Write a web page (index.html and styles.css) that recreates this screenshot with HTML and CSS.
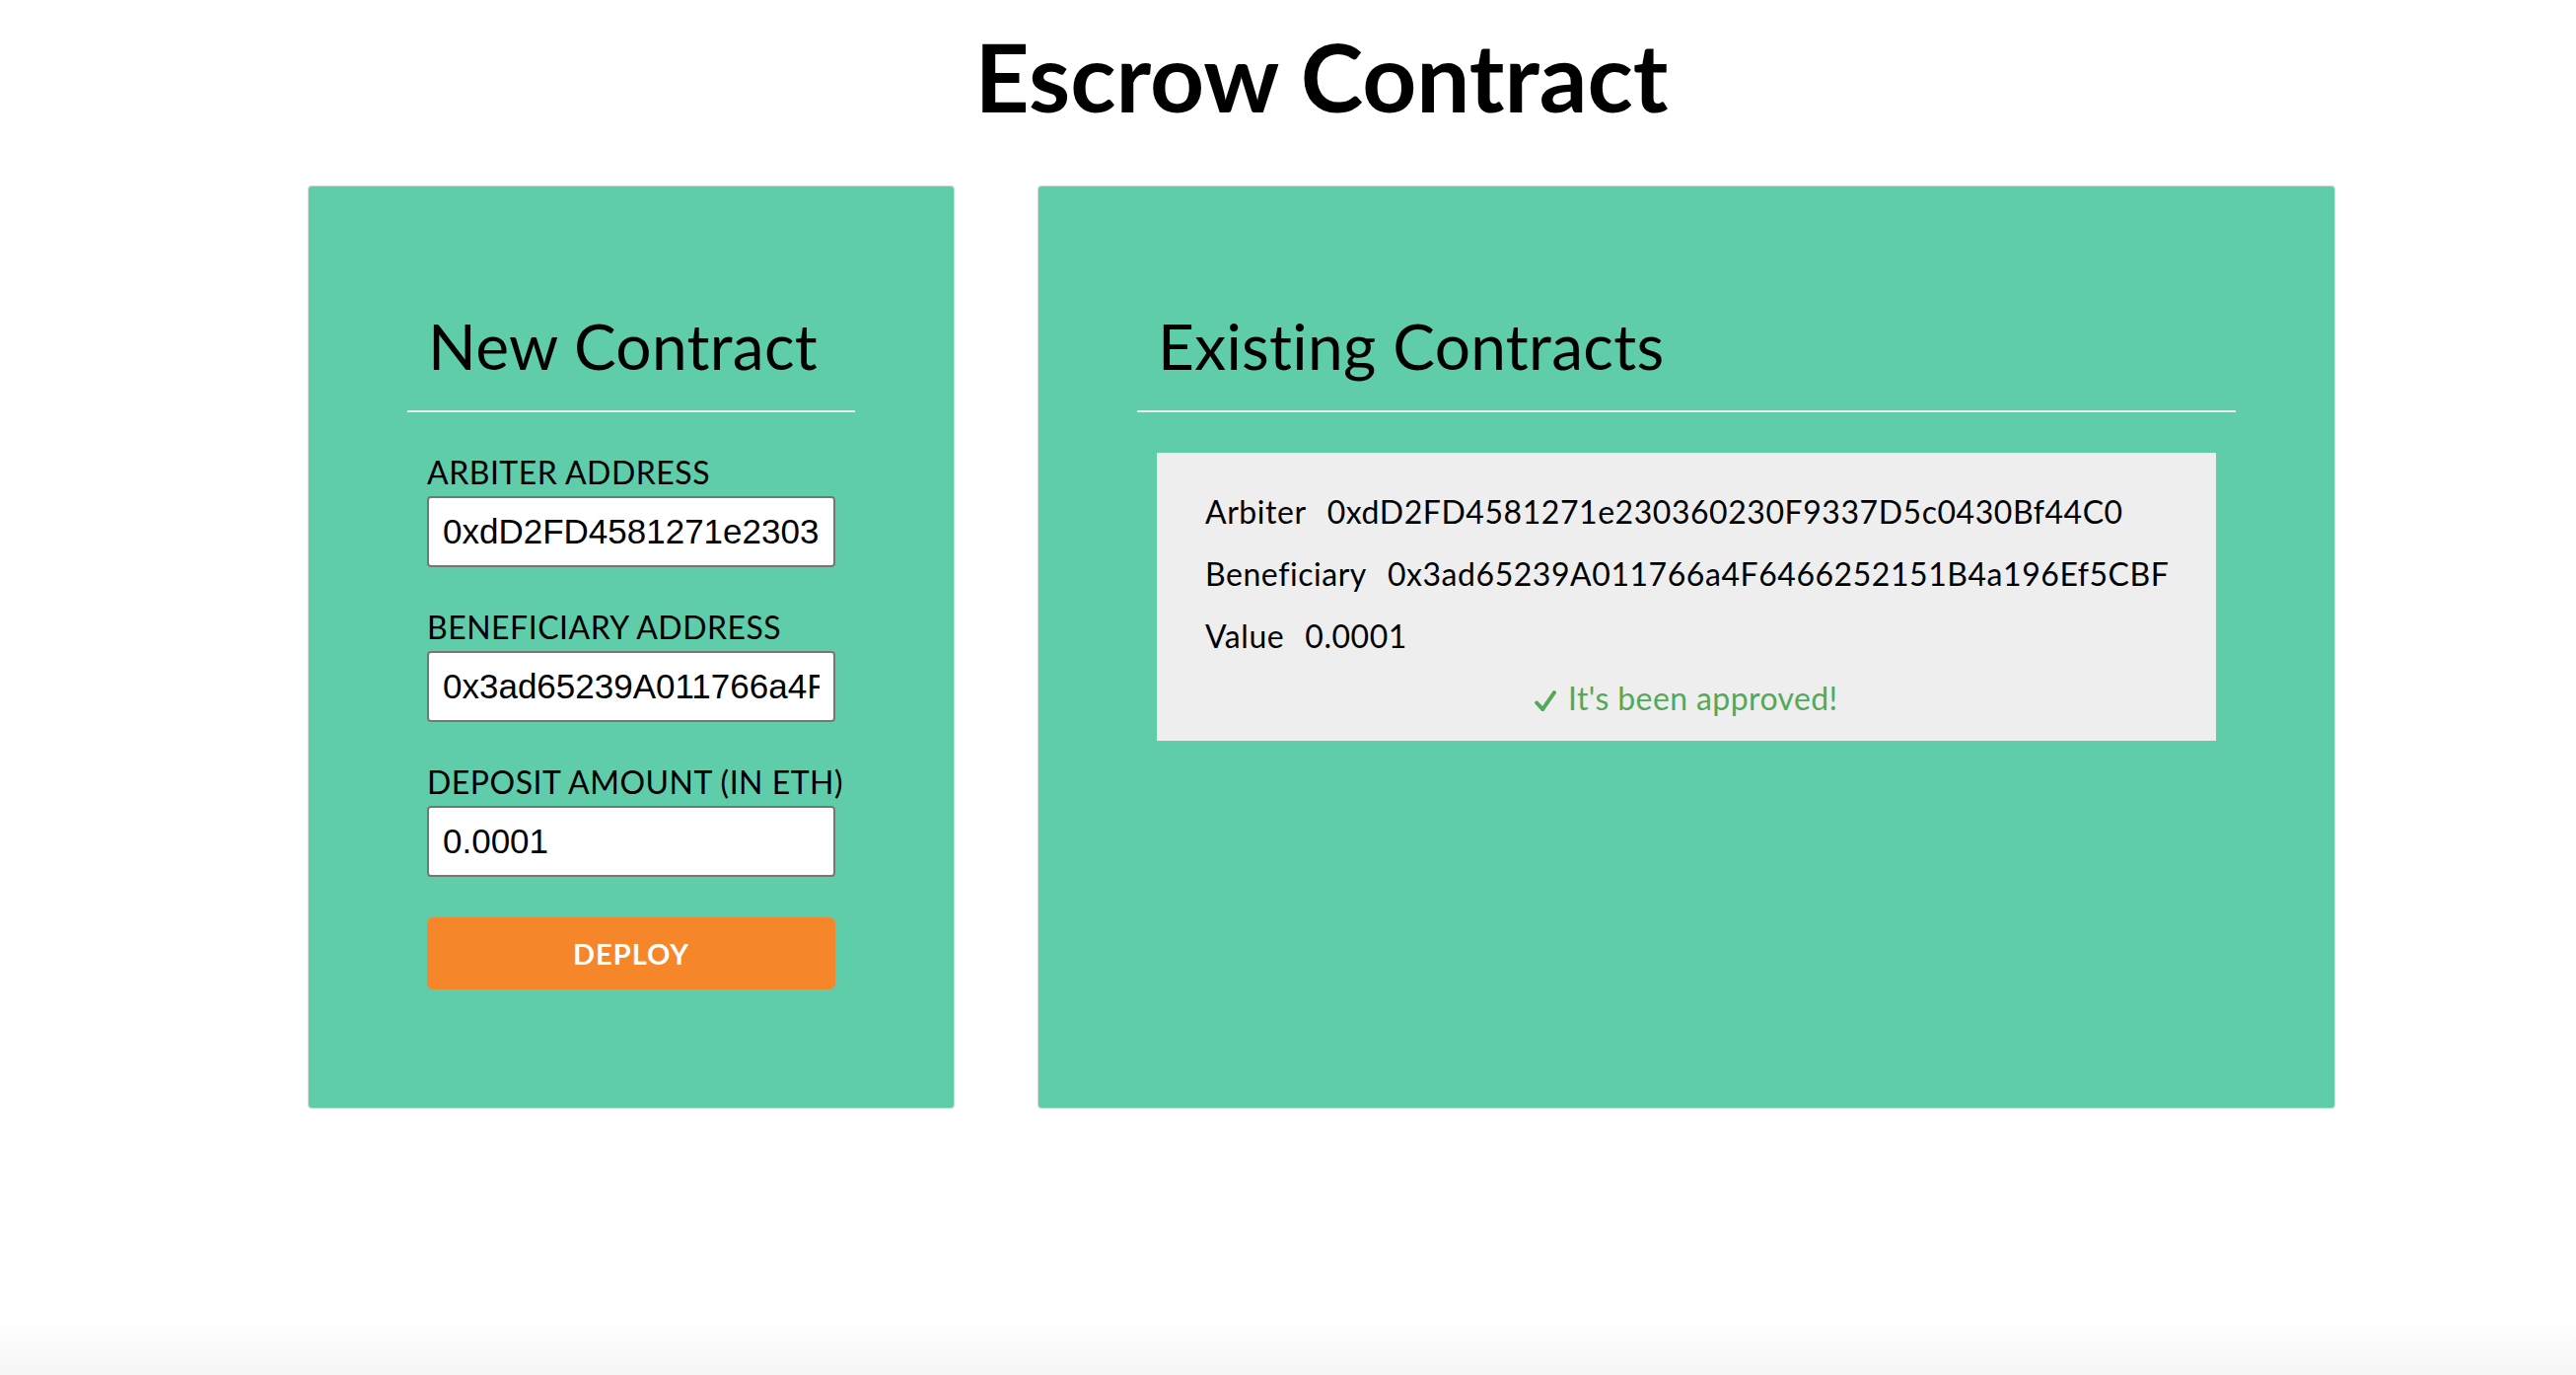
FILE: index.html
```html
<!DOCTYPE html>
<html lang="en">
<head>
<meta charset="utf-8">
<title>Escrow Contract</title>
<link rel="stylesheet" href="styles.css">
</head>
<body>
<div class="page">
  <h1 class="page-title">Escrow Contract</h1>
  <div class="columns">
    <section class="card card-new">
      <div class="card-head"><h2 class="card-title">New Contract</h2></div>
      <form class="form">
        <label class="field">
          <span class="field-label">Arbiter Address</span>
          <input class="field-input" type="text" value="0xdD2FD4581271e230360230F9337D5c0430Bf44C0">
        </label>
        <label class="field">
          <span class="field-label">Beneficiary Address</span>
          <input class="field-input" type="text" value="0x3ad65239A011766a4F6466252151B4a196Ef5CBF">
        </label>
        <label class="field">
          <span class="field-label">Deposit Amount (in ETH)</span>
          <input class="field-input" type="text" value="0.0001">
        </label>
        <button class="deploy" type="button">Deploy</button>
      </form>
    </section>
    <section class="card card-existing">
      <div class="card-head"><h2 class="card-title">Existing Contracts</h2></div>
      <div class="contract-list">
        <div class="contract">
          <div class="contract-row"><span class="row-label">Arbiter</span><span class="row-value">0xdD2FD4581271e230360230F9337D5c0430Bf44C0</span></div>
          <div class="contract-row"><span class="row-label">Beneficiary</span><span class="row-value">0x3ad65239A011766a4F6466252151B4a196Ef5CBF</span></div>
          <div class="contract-row"><span class="row-label">Value</span><span class="row-value">0.0001</span></div>
          <div class="approved"><svg class="check" viewBox="0 0 22 21" width="22" height="21" aria-hidden="true"><path d="M2.2 12.5 L8.2 19.2 L20 2.2" fill="none" stroke="currentColor" stroke-width="4" stroke-linecap="round" stroke-linejoin="round"/></svg> It's been approved!</div>
        </div>
      </div>
    </section>
  </div>
</div>
</body>
</html>
```
FILE: styles.css
```css
* { box-sizing: border-box; }

html, body { margin: 0; padding: 0; }

body {
  font-family: Lato, "Noto Sans", sans-serif;
  color: #000;
  min-height: 100vh;
  background: linear-gradient(to bottom, #ffffff 0, #ffffff calc(100% - 60px), #f6f6f6 100%);
}

.page {
  width: 2056px;
  margin-left: 312px;
  padding-top: 19px;
}

.page-title {
  margin: 0 0 54px;
  font-size: 96px;
  line-height: 115px;
  font-weight: 700;
  text-align: center;
}

.columns {
  display: flex;
  gap: 84px;
  align-items: stretch;
}

.card {
  background: #60cdaa;
  border: 1px solid #d6d6d6;
  border-radius: 4px;
  padding: 123px 100px 120px;
}

.card-new { width: 656px; }
.card-existing { width: 1316px; }

.card-head {
  padding: 0 21px 27px;
  border-bottom: 2px solid #ececec;
}

.card-title {
  margin: 0;
  font-size: 64px;
  line-height: 77px;
  font-weight: 400;
  letter-spacing: 0.3px;
}

.form {
  margin-top: 42px;
  padding: 0 20px;
  display: flex;
  flex-direction: column;
}

.field {
  display: flex;
  flex-direction: column;
  gap: 5px;
  margin-bottom: 42px;
}

.field:last-of-type { margin-bottom: 41px; }

.field-label {
  font-size: 32px;
  line-height: 38px;
  letter-spacing: 0.5px;
  white-space: nowrap;
  text-transform: uppercase;
}

.field-input {
  height: 72px;
  width: 100%;
  border: 2px solid #767676;
  border-radius: 4px;
  background: #fff;
  padding: 0 14px;
  font-family: "Liberation Sans", Arial, sans-serif;
  font-size: 35px;
  color: #000;
}

.deploy {
  height: 73px;
  width: 100%;
  border: 0;
  border-radius: 6px;
  background: #f5862a;
  color: #fff;
  font-family: Lato, "Noto Sans", sans-serif;
  font-size: 29px;
  font-weight: 700;
  letter-spacing: 1px;
  text-transform: uppercase;
}

.contract-list {
  margin-top: 41px;
  padding: 0 20px;
}

.contract {
  background: #eeeeee;
  padding: 41px 49px 24px;
  display: flex;
  flex-direction: column;
  gap: 25px;
}

.contract-row {
  display: flex;
  gap: 21px;
  font-size: 32px;
  line-height: 38px;
  letter-spacing: 0.55px;
}

.approved {
  font-size: 32px;
  line-height: 38px;
  letter-spacing: 0.4px;
  text-align: center;
  color: #54a958;
}

.check {
  display: inline-block;
  vertical-align: -1px;
  margin-right: 3px;
}
```
